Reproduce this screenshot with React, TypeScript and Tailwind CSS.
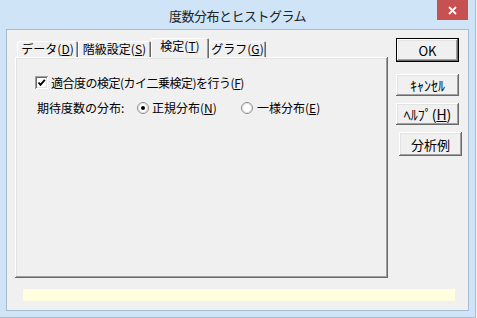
const raised =
    "shadow-[inset_-1px_-1px_0_#696969,inset_1px_1px_0_#ffffff,inset_-2px_-2px_0_#a0a0a0,inset_2px_2px_0_#e3e3e3]";
const sunken =
    "shadow-[inset_1px_1px_0_#a0a0a0,inset_-1px_-1px_0_#ffffff,inset_2px_2px_0_#696969,inset_-2px_-2px_0_#e3e3e3]";

interface TabProps {
    label: string;
    keyChar: string;
    width: string;
    active?: boolean;
}

function Tab({ label, keyChar, width, active }: TabProps) {
    if (active) {
        return (
            <div
                className={`${width} h-[20px] -mb-px relative z-10 bg-[#f0f0f0] flex items-center justify-center pb-[4px] rounded-t-[2px] shadow-[inset_1px_1px_0_#ffffff,inset_-1px_0_0_#696969,inset_-2px_0_0_#a0a0a0]`}
            >
                {label}(<u>{keyChar}</u>)
            </div>
        );
    }
    return (
        <div
            className={`${width} h-[16px] flex items-center justify-center rounded-t-[2px] shadow-[inset_1px_1px_0_#ffffff,inset_-1px_0_0_#696969,inset_-2px_0_0_#a0a0a0]`}
        >
            {label}(<u>{keyChar}</u>)
        </div>
    );
}

function Radio({ checked }: { checked?: boolean }) {
    return (
        <svg width="12" height="12" viewBox="0 0 12 12">
            <circle cx="6" cy="6" r="5.5" fill="#ffffff" stroke="#8a8a8a" />
            <circle cx="6" cy="6" r="4.5" fill="none" stroke="#d8d8d8" />
            {checked && <circle cx="6" cy="6" r="2" fill="#000000" />}
        </svg>
    );
}

function Btn({ children, isDefault, className }: { children: React.ReactNode; isDefault?: boolean; className: string }) {
    if (isDefault) {
        return (
            <div className={`${className} border border-black`}>
                <div className={`h-full flex items-center justify-center ${raised}`}>{children}</div>
            </div>
        );
    }
    return <div className={`${className} flex items-center justify-center ${raised}`}>{children}</div>;
}

export default function App() {
    return (
        <div className="w-[477px] h-[318px] flex bg-[#f3f3f3] font-['Noto_Sans_CJK_JP','Noto_Sans',sans-serif] text-[12px] leading-none text-black">
            <div className="w-[476px] h-[318px] border-r border-b border-[#a9bbcd] bg-[#cfe4f7] flex flex-col">
                {/* title bar */}
                <div className="h-[29px] grid grid-cols-[38px_1fr_38px]">
                    <div />
                    <div className="flex items-center justify-center text-[13px] tracking-[-0.5px] text-[#222222] pt-[1px]">
                        度数分布とヒストグラム
                    </div>
                    <div>
                        <div className="w-[31px] h-[20px] bg-[#c75050] flex items-center justify-center">
                            <svg width="9" height="9" viewBox="0 0 9 9">
                                <path d="M1 1 L8 8 M8 1 L1 8" stroke="#ffffff" strokeWidth="1.8" />
                            </svg>
                        </div>
                    </div>
                </div>

                {/* client area */}
                <div className="ml-[6px] w-[463px] h-[282px] border border-[#a7bcd2] bg-[#f0f0f0] flex flex-col">
                    <div className="flex pl-[8px] pt-[8px] gap-[8px]">
                        <div className="w-[373px] flex flex-col">
                            <div className="h-[19px] flex items-end pl-[2px]">
                                <Tab label="データ" keyChar="D" width="w-[61px]" />
                                <Tab label="階級設定" keyChar="S" width="w-[73px]" />
                                <Tab label="検定" keyChar="T" width="w-[58px]" active />
                                <Tab label="グラフ" keyChar="G" width="w-[57px]" />
                            </div>
                            <div className={`h-[221px] ${raised} pl-[20px] pt-[19px] flex flex-col`}>
                                <div className="h-[13px] flex items-center gap-[3px]">
                                    <div className={`w-[13px] h-[13px] bg-white ${sunken} flex items-center justify-center`}>
                                        <svg width="9" height="9" viewBox="0 0 9 9">
                                            <polyline points="1.5,4.5 3.5,6.8 7.8,1.8" fill="none" stroke="#000000" strokeWidth="1.8" />
                                        </svg>
                                    </div>
                                    <span className="tracking-[-0.5px]">
                                        適合度の検定(カイ二乗検定)を行う(<u>F</u>)
                                    </span>
                                </div>
                                <div className="h-[14px] mt-[12px] pl-[2px] flex items-center">
                                    <span className="w-[100px]">期待度数の分布:</span>
                                    <Radio checked />
                                    <span className="ml-[3px] w-[89px]">
                                        正規分布(<u>N</u>)
                                    </span>
                                    <Radio />
                                    <span className="ml-[4px]">
                                        一様分布(<u>E</u>)
                                    </span>
                                </div>
                            </div>
                        </div>

                        <div className="w-[66px] flex flex-col">
                            <Btn isDefault className="w-[63px] h-[24px] text-[13px]">
                                OK
                            </Btn>
                            <Btn className="w-[63px] h-[22px] mt-[12px] text-[14px]">ｷｬﾝｾﾙ</Btn>
                            <Btn className="w-[63px] h-[22px] mt-[7px] text-[14px]">
                                ﾍﾙﾌﾟ(<u>H</u>)
                            </Btn>
                            <Btn className="w-[63px] h-[24px] mt-[7px] ml-[3px] text-[13px]">分析例</Btn>
                        </div>
                    </div>

                    <div className="ml-[16px] mt-[11px] w-[432px] h-[12px] bg-[#ffffe0]" />
                </div>
            </div>
        </div>
    );
}
